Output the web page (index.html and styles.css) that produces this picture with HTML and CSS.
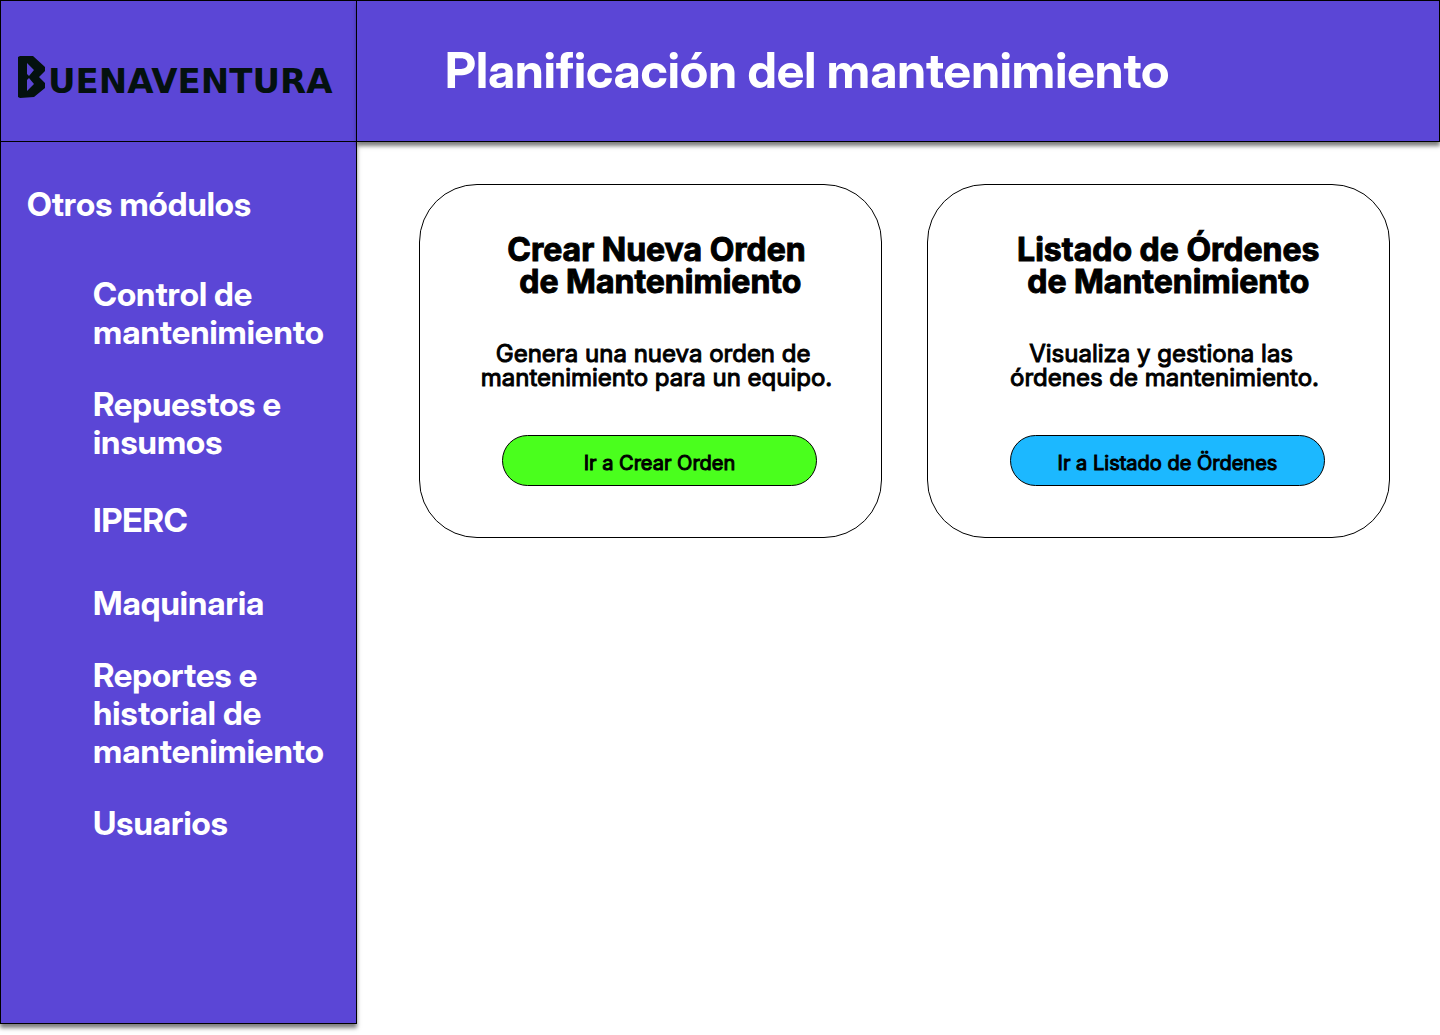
FILE: index.html
```html
<!DOCTYPE html>
<html lang="es">
<head>
  <meta charset="utf-8">
  <meta name="viewport" content="width=device-width, initial-scale=1">
  <title>Planificación del mantenimiento</title>
  <link rel="stylesheet" href="styles.css">
</head>
<body>
  <div class="app">
    <aside class="sidebar">
      <div class="brand">
        <svg class="brand-mark" viewBox="0 0 28 42" aria-hidden="true">
          <path fill-rule="evenodd" d="M0 1L2 0H15L27 11V15L21 21L27 27V32L16 41L2 42L0 41ZM9 7V18L11 20L16 14ZM9 35V24L11 22L16 28Z"/>
        </svg>
        <span class="brand-name">UENAVENTURA</span>
      </div>
      <nav class="modules">
        <h2 class="modules-title">Otros módulos</h2>
        <ul class="modules-list">
          <li><a href="#control">Control de mantenimiento</a></li>
          <li><a href="#repuestos">Repuestos e insumos</a></li>
          <li class="modules-spaced"><a href="#iperc">IPERC</a></li>
          <li><a href="#maquinaria">Maquinaria</a></li>
          <li><a href="#reportes">Reportes e historial de mantenimiento</a></li>
          <li><a href="#usuarios">Usuarios</a></li>
        </ul>
      </nav>
    </aside>
    <div class="content">
      <header class="topbar">
        <h1 class="topbar-title">Planificación del mantenimiento</h1>
      </header>
      <main class="cards">
        <section class="card">
          <h2 class="card-title">Crear Nueva Orden<br>&nbsp;de Mantenimiento</h2>
          <p class="card-text">Genera una nueva orden de&nbsp;<br>mantenimiento para un equipo.</p>
          <button class="card-button card-button-create" type="button">Ir a Crear Orden</button>
        </section>
        <section class="card">
          <h2 class="card-title">&nbsp;Listado de Órdenes<br>&nbsp;de Mantenimiento</h2>
          <p class="card-text">Visualiza y gestiona las&nbsp;<br>órdenes de mantenimiento.</p>
          <button class="card-button card-button-list" type="button">Ir a Listado de Ördenes</button>
        </section>
      </main>
    </div>
  </div>
</body>
</html>
```

FILE: styles.css
```css
* {
  box-sizing: border-box;
}

body,
h1,
h2,
p,
ul {
  margin: 0;
}

body {
  background: #fff;
  color: #000;
  font-family: Inter, "Liberation Sans", sans-serif;
}

.app {
  display: grid;
  grid-template-columns: 357px 1fr;
  min-height: 100vh;
  padding-bottom: 11px;
}

.sidebar {
  background: #5b46d6;
  border: 1px solid #000;
  box-shadow: 0 4px 4px rgba(0, 0, 0, 0.5);
}

.brand {
  display: flex;
  align-items: flex-end;
  gap: 2px;
  height: 141px;
  padding: 0 16px 43px 17px;
  border-bottom: 1px solid #000;
  color: #04110f;
}

.brand-mark {
  flex: none;
  width: 28px;
  height: 42px;
  fill: currentColor;
}

.brand-name {
  font-family: "DejaVu Sans", sans-serif;
  font-size: 34px;
  font-weight: 700;
  line-height: 34px;
}

.modules {
  padding: 43px 26px;
  color: #fff;
  font-family: "Inter Display", Inter, "Liberation Sans", sans-serif;
}

.modules-title {
  font-size: 33px;
  font-weight: 700;
  line-height: 38px;
}

.modules-list {
  display: grid;
  gap: 34px;
  margin-top: 52px;
  padding: 0 0 0 66px;
  list-style: none;
  font-size: 33px;
  font-weight: 700;
  line-height: 38px;
}

.modules-list a {
  color: inherit;
  text-decoration: none;
}

.modules-spaced {
  padding: 6px 0 11px;
}

.topbar {
  display: flex;
  align-items: center;
  min-height: 142px;
  padding: 0 88px;
  background: #5b46d6;
  border: 1px solid #000;
  border-left: 0;
  box-shadow: 0 4px 4px rgba(0, 0, 0, 0.5);
}

.topbar-title {
  color: #fff;
  font-family: "Inter Display", Inter, "Liberation Sans", sans-serif;
  font-size: 49px;
  font-weight: 700;
  line-height: 58px;
}

.cards {
  display: grid;
  grid-template-columns: 1fr 1fr;
  gap: 45px;
  padding: 42px 50px 42px 62px;
}

.card {
  display: flex;
  flex-direction: column;
  align-items: center;
  padding: 49px 0 51px 12px;
  border: 1px solid #000;
  border-radius: 58px;
  text-align: center;
}

.card-title {
  font-size: 32px;
  font-weight: 700;
  line-height: 32px;
  -webkit-text-stroke: 1px #000;
}

.card-text {
  margin-top: 44px;
  font-size: 24px;
  line-height: 24px;
  -webkit-text-stroke: 1px #000;
}

.card-button {
  width: 315px;
  height: 51px;
  margin: 45px 0 0 6px;
  padding: 4px 0 0;
  border: 1px solid #000;
  border-radius: 26px;
  color: #000;
  font: inherit;
  font-size: 20px;
  -webkit-text-stroke: 1px #000;
  cursor: pointer;
}

.card-button-create {
  background: #4aff1d;
}

.card-button-list {
  background: #1cb8ff;
}
```
